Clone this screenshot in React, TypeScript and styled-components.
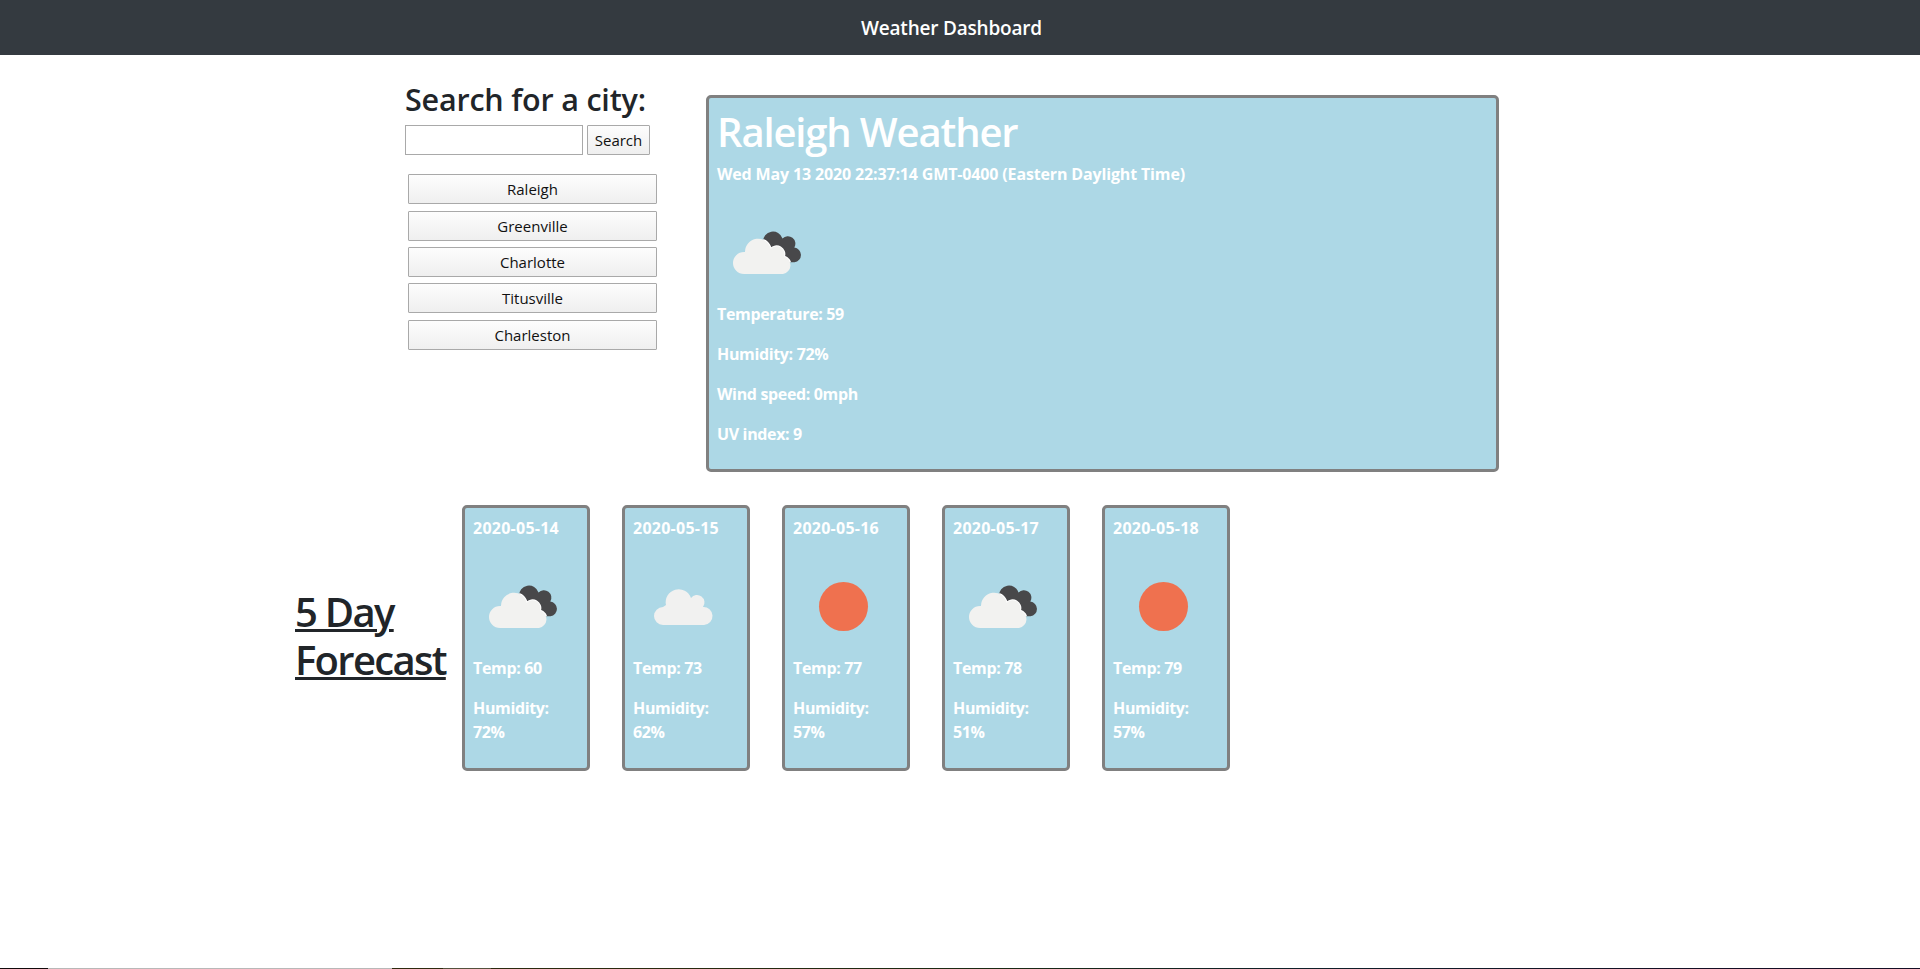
import React from "react";
import styled, { createGlobalStyle } from "styled-components";

const GlobalStyle = createGlobalStyle`
  html, body {
    margin: 0;
    padding: 0;
    background: #fff;
  }
  body {
    font-family: "Open Sans", "Noto Sans", sans-serif;
    color: #212529;
  }
  * {
    box-sizing: border-box;
  }
`;

const Page = styled.div`
  height: 969px;
  display: flex;
  flex-direction: column;
  overflow: hidden;
`;

const Navbar = styled.nav`
  height: 55px;
  flex: none;
  background: #343a40;
  display: flex;
  align-items: center;
  justify-content: center;
  padding-right: 17px;
`;

const Brand = styled.span`
  color: #fff;
  font-size: 19px;
  font-weight: 600;
  letter-spacing: -0.2px;
`;

const TopRow = styled.div`
  display: flex;
  margin: 25px 0 0 405px;
  align-items: flex-start;
`;

const Sidebar = styled.aside`
  width: 301px;
  flex: none;
`;

const SearchTitle = styled.h3`
  margin: 0 0 7px;
  font-size: 30.5px;
  line-height: 38px;
  font-weight: 600;
  letter-spacing: -0.2px;
  white-space: nowrap;
`;

const SearchForm = styled.div`
  display: flex;
  gap: 4px;
`;

const SearchInput = styled.input`
  width: 178px;
  height: 30px;
  border: 1px solid #a9a9a9;
  background: #fff;
  padding: 0;
`;

const Button = styled.button`
  font-family: inherit;
  font-size: 15px;
  color: #111;
  height: 30px;
  padding: 0 0 1px;
  border: 1px solid #a9a9a9;
  border-radius: 1px;
  background: linear-gradient(#fdfdfd, #efefef);
  display: block;
`;

const SearchButton = styled(Button)`
  width: 63px;
`;

const CityList = styled.div`
  margin: 19px 0 0 3px;
  width: 249px;
  display: flex;
  flex-direction: column;
`;

const CityButton = styled(Button)<{ $gap: number }>`
  width: 100%;
  margin-bottom: ${(p) => p.$gap}px;
`;

const CurrentCard = styled.section`
  width: 793px;
  height: 377px;
  margin-top: 15px;
  background: #add8e6;
  border: 3px solid #808080;
  border-radius: 5px;
  padding: 8px;
  color: #fff;
`;

const CityTitle = styled.h1`
  margin: 0 0 6px;
  padding-top: 2px;
  font-size: 40px;
  line-height: 48px;
  font-weight: 600;
  letter-spacing: -1.15px;
`;

const Info = styled.p`
  margin: 0 0 16px;
  font-size: 16px;
  line-height: 24px;
  font-weight: 700;
  letter-spacing: -0.35px;
`;

const DateLine = styled(Info)`
  letter-spacing: -0.15px;
`;

const DayDate = styled(Info)`
  letter-spacing: 0.25px;
`;

const IconSlot = styled.div`
  width: 100px;
  height: 100px;
`;

const ForecastRow = styled.div`
  display: flex;
  align-items: center;
  margin: 33px 0 0 295px;
`;

const ForecastTitle = styled.h1`
  width: 167px;
  flex: none;
  margin: 0 0 4px;
  font-size: 40px;
  line-height: 48px;
  font-weight: 600;
  letter-spacing: -1.7px;
  text-decoration: underline;
  text-decoration-thickness: 3px;
`;

const ForecastCards = styled.div`
  display: flex;
  gap: 32px;
`;

const DayCard = styled.article`
  width: 128px;
  height: 266px;
  background: #add8e6;
  border: 3px solid #808080;
  border-radius: 5px;
  padding: 8px;
  color: #fff;
`;

const Strip = styled.div`
  margin-top: auto;
  height: 1px;
  flex: none;
  background: linear-gradient(
    90deg,
    #120a0c 0 48px,
    #b8b8b8 48px 392px,
    #2e2a10 392px 443px,
    #55523e 443px 491px,
    #2b2a10 491px 640px,
    #1a2a14 1000px,
    #10202a 1300px,
    #150f25 1700px,
    #150f25 100%
  );
`;

type IconKind = "clouds" | "cloud" | "sun";

const LIGHT_CLOUD =
  "M27 72A11 11 0 0 1 27 50H28A13 13 0 0 1 53.700 47A7.800 7.800 0 0 1 67 54.500A9 9 0 0 1 66 72Z";
const DARK_CLOUD =
  "M46 40A10 10 0 0 1 65.500 36.500A7.500 7.500 0 0 1 77.300 45.600A7.400 7.400 0 0 1 77.500 60.300H60Z";

function WeatherIcon({ kind }: { kind: IconKind }) {
  return (
    <svg width="100" height="100" viewBox="0 0 100 100">
      {kind === "sun" && <circle cx="50.500" cy="50.500" r="24.500" fill="#ef714f" />}
      {kind === "cloud" && (
        <path
          d="M30 69A9 9 0 0 1 30 51L33 49A13 13 0 0 1 58 42A6.500 6.500 0 0 1 70 51A9 9 0 0 1 71 69Z"
          fill="#f1f1f0"
        />
      )}
      {kind === "clouds" && (
        <>
          <clipPath id="dark-cloud">
            <path d={DARK_CLOUD} />
          </clipPath>
          <path d={DARK_CLOUD} fill="#48484a" />
          <path d={LIGHT_CLOUD} fill="none" stroke="#fff" strokeWidth="2" clipPath="url(#dark-cloud)" />
          <path d={LIGHT_CLOUD} fill="#f2f2f0" />
        </>
      )}
    </svg>
  );
}

const cities = [
  { name: "Raleigh", gap: 7 },
  { name: "Greenville", gap: 6 },
  { name: "Charlotte", gap: 6 },
  { name: "Titusville", gap: 7 },
  { name: "Charleston", gap: 0 },
];

const forecast: { date: string; icon: IconKind; temp: number; humidity: number }[] = [
  { date: "2020-05-14", icon: "clouds", temp: 60, humidity: 72 },
  { date: "2020-05-15", icon: "cloud", temp: 73, humidity: 62 },
  { date: "2020-05-16", icon: "sun", temp: 77, humidity: 57 },
  { date: "2020-05-17", icon: "clouds", temp: 78, humidity: 51 },
  { date: "2020-05-18", icon: "sun", temp: 79, humidity: 57 },
];

export default function App() {
  return (
    <Page>
      <GlobalStyle />
      <Navbar>
        <Brand>Weather Dashboard</Brand>
      </Navbar>
      <TopRow>
        <Sidebar>
          <SearchTitle>Search for a city:</SearchTitle>
          <SearchForm>
            <SearchInput />
            <SearchButton>Search</SearchButton>
          </SearchForm>
          <CityList>
            {cities.map((city) => (
              <CityButton key={city.name} $gap={city.gap}>
                {city.name}
              </CityButton>
            ))}
          </CityList>
        </Sidebar>
        <CurrentCard>
          <CityTitle>Raleigh Weather</CityTitle>
          <DateLine>Wed May 13 2020 22:37:14 GMT-0400 (Eastern Daylight Time)</DateLine>
          <IconSlot>
            <WeatherIcon kind="clouds" />
          </IconSlot>
          <Info>Temperature: 59</Info>
          <Info>Humidity: 72%</Info>
          <Info>Wind speed: 0mph</Info>
          <Info>UV index: 9</Info>
        </CurrentCard>
      </TopRow>
      <ForecastRow>
        <ForecastTitle>5 Day Forecast</ForecastTitle>
        <ForecastCards>
          {forecast.map((day) => (
            <DayCard key={day.date}>
              <DayDate>{day.date}</DayDate>
              <IconSlot>
                <WeatherIcon kind={day.icon} />
              </IconSlot>
              <Info>Temp: {day.temp}</Info>
              <Info>Humidity: {day.humidity}%</Info>
            </DayCard>
          ))}
        </ForecastCards>
      </ForecastRow>
      <Strip />
    </Page>
  );
}
